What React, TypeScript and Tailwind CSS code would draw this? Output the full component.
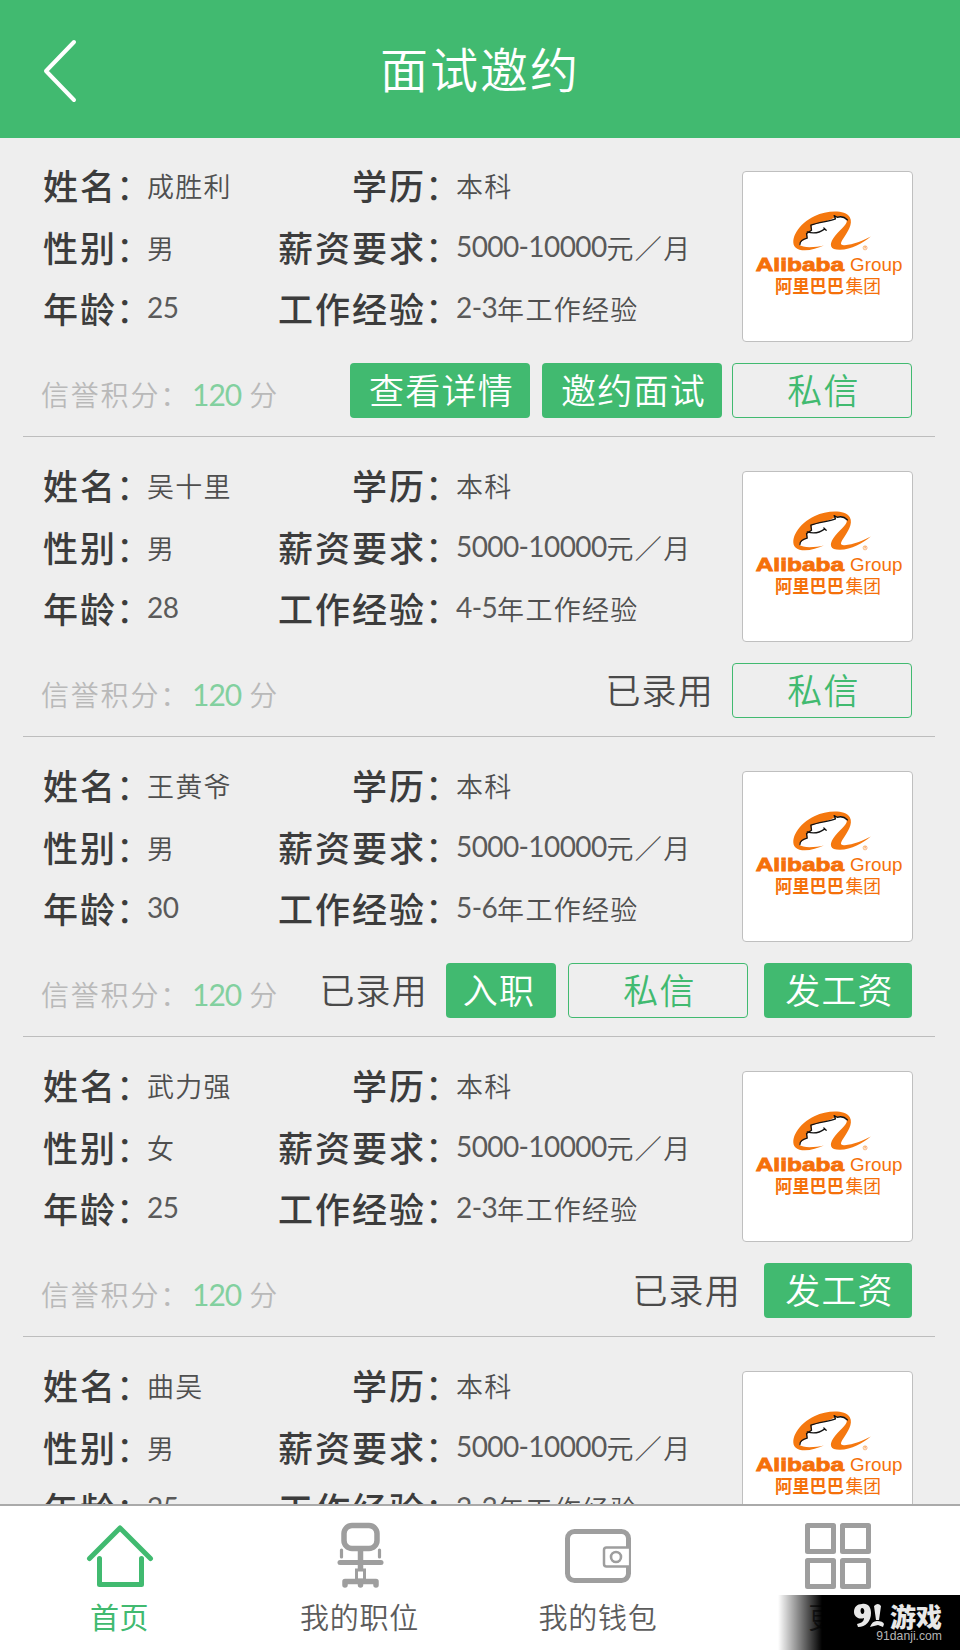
import type { ReactNode } from 'react';

type Action = {
  label: string;
  kind: 'solid' | 'outline' | 'text';
  className: string;
};

type Candidate = {
  name: string;
  gender: string;
  age: string;
  years: string;
  actions: Action[];
};

const candidates: Candidate[] = [
  {
    name: '成胜利',
    gender: '男',
    age: '25',
    years: '2-3',
    actions: [
      { label: '查看详情', kind: 'solid', className: 'w-[180px]' },
      { label: '邀约面试', kind: 'solid', className: 'ml-3 w-[180px]' },
      { label: '私信', kind: 'outline', className: 'ml-2.5 w-[180px]' },
    ],
  },
  {
    name: '吴十里',
    gender: '男',
    age: '28',
    years: '4-5',
    actions: [
      { label: '已录用', kind: 'text', className: 'mr-[18px]' },
      { label: '私信', kind: 'outline', className: 'w-[180px]' },
    ],
  },
  {
    name: '王黄爷',
    gender: '男',
    age: '30',
    years: '5-6',
    actions: [
      { label: '已录用', kind: 'text', className: 'mr-[18px]' },
      { label: '入职', kind: 'solid', className: 'w-[110px] pr-[7px]' },
      { label: '私信', kind: 'outline', className: 'ml-3 w-[180px]' },
      { label: '发工资', kind: 'solid', className: 'ml-4 w-[148px]' },
    ],
  },
  {
    name: '武力强',
    gender: '女',
    age: '25',
    years: '2-3',
    actions: [
      { label: '已录用', kind: 'text', className: 'mr-[23px]' },
      { label: '发工资', kind: 'solid', className: 'w-[148px]' },
    ],
  },
  {
    name: '曲吴',
    gender: '男',
    age: '25',
    years: '2-3',
    actions: [],
  },
];

const actionStyles = {
  solid: 'flex h-[55px] items-center justify-center rounded-[4px] bg-[#41ba70] pb-1 pl-[3px] text-white',
  outline: 'flex h-[55px] items-center justify-center rounded-[4px] border border-[#41ba70] pb-1 pl-[3px] text-[#41ba70]',
  text: 'flex h-[55px] items-center pb-1 text-[#4a4a4a]',
};

function Label({ children }: { children: string }) {
  return (
    <div className="flex justify-end text-[35px] leading-[61px] font-medium whitespace-nowrap text-[#3c3c3c]">
      <span className="tracking-[2px]">{children}</span>
      <span className="-ml-px w-[30px] font-normal">：</span>
    </div>
  );
}

function Value({ children }: { children: ReactNode }) {
  return (
    <div className="pt-[2px] pl-px text-[27px] leading-[59px] font-[350] tracking-[1.3px] whitespace-nowrap text-[#4f4f4f]">
      {children}
    </div>
  );
}

function Num({ children }: { children: string }) {
  return (
    <span className="align-[2px] font-['Lato'] text-[28px] leading-none font-normal tracking-[-0.6px] text-[#5a5a5a]">
      {children}
    </span>
  );
}

function CompanyLogo() {
  return (
    <div className="h-[171px] w-[171px] rounded-[4px] border border-[#bfbfbf] bg-white">
      <svg viewBox="69 36 508 508" className="h-full w-full">
        <path
          fill="#f5780f"
          d="M312 257C285 269 245 280 226 262C208 240 235 190 285 168C320 152 375 148 390 172C401 192 383 217 370 237C360 252 362 257 375 256C400 254 430 243 453 230C430 250 395 269 360 270C330 270 328 255 340 236C355 212 384 195 381 180C377 169 360 168 345 173C325 185 300 188 276 196L273 213L262 222L262 236C250 240 240 247 238 255C250 266 290 262 312 257Z"
        />
        <g fill="none" stroke="#111" strokeWidth="4" strokeLinecap="round" strokeLinejoin="round">
          <path d="M240 254C240 244 250 238 262 235L260 221L275 211L273 196C300 186 325 186 347 177L343 167L352 172C365 168 375 172 383 180" />
          <path d="M262 216C280 222 300 218 315 207M312 204L319 211" />
        </g>
        <circle cx="436" cy="264" r="6" fill="none" stroke="#f5780f" strokeWidth="1.5" />
        <text x="434" y="267" fontSize="8" fill="#f5780f" className="font-['Liberation_Sans']">R</text>
        <g fill="#f5700a">
          <text x="107" y="333" fontSize="57" fontWeight="700" textLength="266" lengthAdjust="spacingAndGlyphs" stroke="#f5700a" strokeWidth="2.5" className="font-['Liberation_Sans']">Alibaba</text>
          <text x="391" y="333" fontSize="57" textLength="157" lengthAdjust="spacingAndGlyphs" className="font-['Liberation_Sans']">Group</text>
          <text x="165" y="401" fontSize="54" fontWeight="700" textLength="208" lengthAdjust="spacingAndGlyphs">阿里巴巴</text>
          <text x="377" y="401" fontSize="54" fontWeight="400" textLength="107" lengthAdjust="spacingAndGlyphs">集团</text>
        </g>
      </svg>
    </div>
  );
}

function CandidateCard({ candidate }: { candidate: Candidate }) {
  return (
    <li className="mr-[25px] ml-[23px] h-[300px] border-b border-[#bdbdbd] pr-[22px] pl-[18px]">
      <div className="flex h-[226px] justify-between">
        <div className="grid h-[201px] grid-cols-[105px_132px_177px_236px] grid-rows-[62px_61px_61px] pt-[17px]">
          <Label>姓名</Label>
          <Value>{candidate.name}</Value>
          <Label>学历</Label>
          <Value>本科</Value>
          <Label>性别</Label>
          <Value>{candidate.gender}</Value>
          <Label>薪资要求</Label>
          <Value><Num>5000-10000</Num>元／月</Value>
          <Label>年龄</Label>
          <Value><Num>{candidate.age}</Num></Value>
          <Label>工作经验</Label>
          <Value><Num>{candidate.years}</Num>年工作经验</Value>
        </div>
        <div className="pt-[34px]">
          <CompanyLogo />
        </div>
      </div>
      <div className="flex justify-between pr-px">
        <p className="text-[28px] leading-[62px] font-[350] tracking-[1.8px] text-[#b9b9b9]">
          信誉积分：
          <span className="mr-2 ml-[2px] font-['Lato'] text-[30px] leading-none font-normal tracking-[-1px] text-[#82d09f]">120</span>
          分
        </p>
        <div className="flex text-[35px] leading-none font-[350] tracking-[1.2px] whitespace-nowrap">
          {candidate.actions.map((action) => (
            <div key={action.label} className={`${actionStyles[action.kind]} ${action.className}`}>
              {action.label}
            </div>
          ))}
        </div>
      </div>
    </li>
  );
}

function HomeIcon() {
  return (
    <svg width="68" height="68" viewBox="0 0 68 68" fill="none" stroke="currentColor" strokeWidth="5" strokeLinecap="round" strokeLinejoin="round">
      <path d="M3.5 36.5L34 6L64.5 36.5" />
      <path d="M13.5 36.5V62.5H55.5V36.5" />
    </svg>
  );
}

function ChairIcon() {
  return (
    <svg width="68" height="68" viewBox="0 0 68 68" fill="none" stroke="currentColor" strokeLinecap="round" strokeLinejoin="round">
      <rect x="18" y="3.5" width="33" height="23" rx="8" strokeWidth="5.5" />
      <path d="M34.5 29V48" strokeWidth="5.5" strokeLinecap="butt" />
      <path d="M15.5 28V35M53.500 28V35" strokeWidth="3.2" />
      <path d="M14 40.5H55" strokeWidth="5" />
      <path d="M30.5 48H38.5V58H30.5Z" strokeWidth="3" strokeLinejoin="miter" />
      <path d="M19 63V59.500H50V63M34.500 59.500V63" strokeWidth="5.5" />
    </svg>
  );
}

function WalletIcon() {
  return (
    <svg width="68" height="68" viewBox="0 0 68 68" fill="none" stroke="currentColor">
      <rect x="3.5" y="9.5" width="61" height="49" rx="7" strokeWidth="5" />
      <path d="M66 25.5H42.5Q40 25.5 40 28V42Q40 44.5 42.5 44.5H66" fill="white" strokeWidth="2.5" />
      <path d="M65.8 25V45" strokeWidth="1.8" />
      <circle cx="52" cy="35" r="5" strokeWidth="2.6" />
    </svg>
  );
}

function MoreIcon() {
  return (
    <svg width="68" height="68" viewBox="0 0 68 68" fill="none" stroke="currentColor" strokeWidth="5" strokeLinejoin="round">
      <rect x="3.5" y="3.5" width="26" height="26" />
      <rect x="38.5" y="3.5" width="26" height="26" />
      <rect x="3.5" y="38.5" width="26" height="26" />
      <rect x="38.5" y="38.5" width="26" height="26" />
    </svg>
  );
}

const tabs = [
  { label: '首页', icon: <HomeIcon />, active: true },
  { label: '我的职位', icon: <ChairIcon />, active: false },
  { label: '我的钱包', icon: <WalletIcon />, active: false },
  { label: '更多', icon: <MoreIcon />, active: false },
];

export default function App() {
  return (
    <div className="relative flex h-[1650px] w-[960px] flex-col overflow-hidden bg-[#eee] font-['Noto_Sans_CJK_SC',sans-serif]">
      <header className="grid h-[138px] shrink-0 grid-cols-[200px_1fr_200px] items-center bg-[#41ba70] text-white">
        <svg width="36" height="66" viewBox="0 0 36 66" fill="none" stroke="currentColor" strokeWidth="4" strokeLinecap="round" strokeLinejoin="round" className="mt-1 ml-[42px]">
          <path d="M32 4L4 33L32 62" />
        </svg>
        <h1 className="pb-[5px] text-center text-[48px] leading-none font-[350] tracking-[2px]">面试邀约</h1>
      </header>

      <ul className="-mt-px h-[1367px] shrink-0 overflow-hidden">
        {candidates.map((candidate) => (
          <CandidateCard key={candidate.name} candidate={candidate} />
        ))}
      </ul>

      <nav className="grid h-[146px] shrink-0 grid-cols-[239px_241px_236px_244px] border-t-2 border-[#aaa] bg-white">
        {tabs.map((tab) => (
          <div key={tab.label} className="flex flex-col items-center pt-4">
            <div className={tab.active ? 'text-[#41ba70]' : 'text-[#9e9e9e]'}>{tab.icon}</div>
            <span
              className={
                tab.active
                  ? 'mt-3 text-[29px] leading-none tracking-[0.5px] text-[#41ba70]'
                  : 'mt-3 text-[29px] leading-none font-[350] tracking-[0.8px] text-[#5c5c5c]'
              }
            >
              {tab.label}
            </span>
          </div>
        ))}
      </nav>

      {/* site badge over the last tab */}
      <div className="absolute right-0 bottom-0 flex h-[55px] w-[182px] flex-col items-end bg-[linear-gradient(to_right,transparent,black_44px)] pt-[8px] pr-[18px]">
        <div className="flex items-center gap-[5px] text-[#e8e8e8]">
          <svg width="31" height="25" viewBox="0 0 31 25" fill="currentColor">
            <path
              fillRule="evenodd"
              d="M8 1C14 0 17 4 17 10C17 18 12 24 4 24L3 21C8 20 10 18 10 15C4 17 0 13 0 9C0 4 3 1 8 1ZM8 5C6 5 6 11 8.5 11C11 11 11 5 8 5Z"
            />
            <path d="M20 3Q24 -1 27 3L25 17H22ZM16 24Q18 18 23 18Q29 18 30 21L29 24L24 22Z" />
          </svg>
          <span className="text-[26px] leading-[25px] font-black">游戏</span>
        </div>
        <span className="font-['Liberation_Sans'] text-[12.2px] leading-[17px] text-[#b5b5b5]">91danji.com</span>
      </div>
    </div>
  );
}
